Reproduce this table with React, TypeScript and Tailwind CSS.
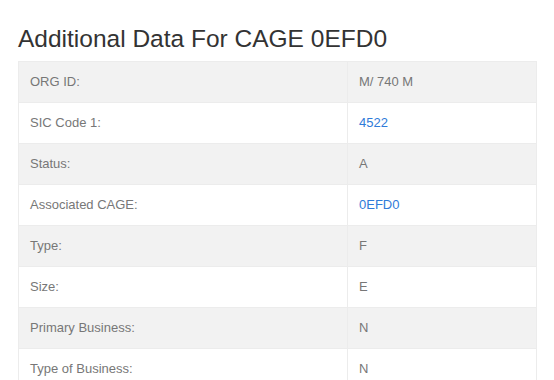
import React from "react";

const rows: { label: string; value: string; link?: boolean }[] = [
  { label: "ORG ID:", value: "M/ 740 M" },
  { label: "SIC Code 1:", value: "4522", link: true },
  { label: "Status:", value: "A" },
  { label: "Associated CAGE:", value: "0EFD0", link: true },
  { label: "Type:", value: "F" },
  { label: "Size:", value: "E" },
  { label: "Primary Business:", value: "N" },
  { label: "Type of Business:", value: "N" },
];

export default function App() {
  return (
    <div
      className="w-[554px] h-[380px] overflow-hidden bg-white"
      style={{ fontFamily: '"Liberation Sans", Arial, sans-serif' }}
    >
      <div className="pl-[18px] pr-[17px]">
        <h1 className="text-[24.5px] leading-[30px] text-[#333] pt-[24px] pb-[7px]">
          Additional Data For CAGE 0EFD0
        </h1>
        <table className="w-[519px] border-collapse text-[13px]">
          <tbody>
            {rows.map((r, i) => (
              <tr key={r.label} className={i % 2 === 0 ? "bg-[#f2f2f2]" : "bg-white"}>
                <td className="h-[41px] w-[329px] border border-[#ececec] pl-[11px] text-[#777] align-middle">
                  {r.label}
                </td>
                <td className="h-[41px] border border-[#ececec] pl-[11px] align-middle">
                  {r.link ? (
                    <span className="text-[#2f7bd9]">{r.value}</span>
                  ) : (
                    <span className="text-[#777]">{r.value}</span>
                  )}
                </td>
              </tr>
            ))}
          </tbody>
        </table>
      </div>
    </div>
  );
}
